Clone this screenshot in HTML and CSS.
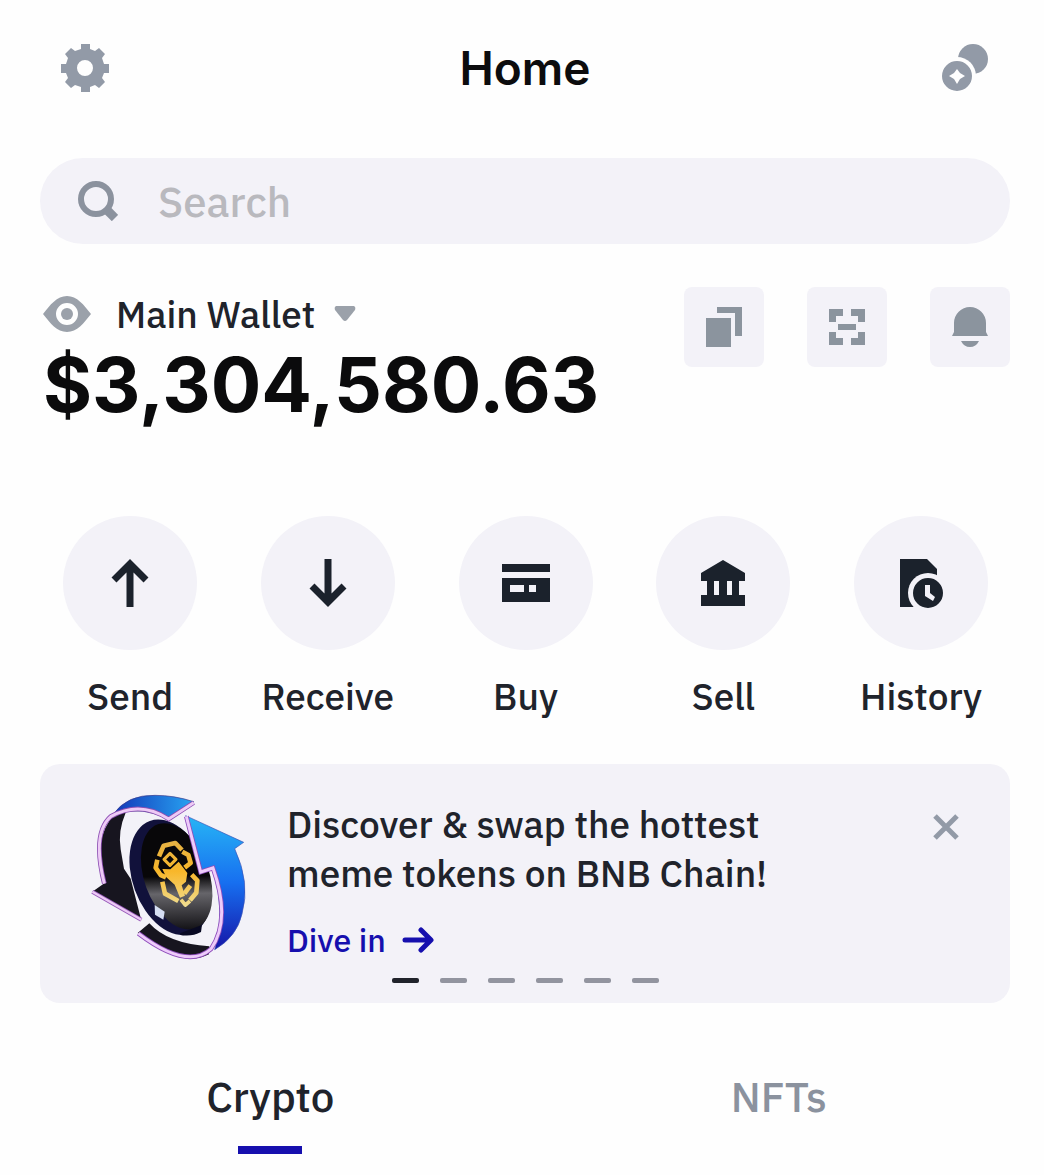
FILE: index.html
```
<!DOCTYPE html>
<html lang="en">
<head>
    <meta charset="UTF-8">
    <meta name="viewport" content="width=device-width, initial-scale=1.0">
    <title>Home</title>
    <link rel="stylesheet" href="styles.css">
</head>
<body>
    <header class="header">
        <button class="icon-button" type="button" aria-label="Settings">
            <svg width="48" height="48" viewBox="0 0 48 48" fill="currentColor">
                <path fill-rule="evenodd" d="M20 0h9v5l5 2 4-3 6 6-3 4 2 6h5v9h-5l-2 5 3 4-6 6-4-3-5 2v5h-9v-5l-6-2-4 3-6-6 3-4-2-5H0v-9h5l2-6-3-4 6-6 4 3 6-2zM24 16a8 8 0 1 0 0 16 8 8 0 0 0 0-16z"/>
            </svg>
        </button>
        <h1>Home</h1>
        <button class="icon-button" type="button" aria-label="Tokens">
            <svg width="48" height="48" viewBox="0 0 48 48" fill="currentColor">
                <mask id="coinCut">
                    <rect width="48" height="48" fill="#fff"/>
                    <circle cx="16" cy="32" r="19" fill="#000"/>
                </mask>
                <circle cx="32" cy="15" r="15" mask="url(#coinCut)"/>
                <path fill-rule="evenodd" d="M16 17a15 15 0 1 0 0 30 15 15 0 0 0 0-30zm0 8 3 4 5 3-5 3-3 5-3-5-5-3 5-3z"/>
            </svg>
        </button>
    </header>

    <main>
        <label class="search">
            <svg width="40" height="40" viewBox="0 0 40 40" fill="none" stroke="currentColor">
                <circle cx="18" cy="18" r="15" stroke-width="6"/>
                <path d="M28 28l9 9" stroke-width="9"/>
            </svg>
            <input type="text" placeholder="Search" aria-label="Search">
        </label>

        <section class="wallet">
            <div class="wallet-info">
                <button class="wallet-name" type="button">
                    <svg width="48" height="36" viewBox="0 0 48 36" fill="currentColor">
                        <path fill-rule="evenodd" d="M0 18C7 9 14 0 24 0s17 9 24 18c-7 9-14 18-24 18S7 27 0 18zM24 7a11 11 0 1 0 0 22 11 11 0 0 0 0-22z"/>
                        <circle cx="24" cy="18" r="6"/>
                    </svg>
                    <span>Main Wallet</span>
                    <svg width="22" height="16" viewBox="0 0 22 16" fill="currentColor">
                        <path d="M2 0h18q2 1 1 4l-8 10q-2 2-4 0L1 4Q0 1 2 0z"/>
                    </svg>
                </button>
                <p class="balance">$3,304,580.63</p>
            </div>
            <div class="tools">
                <button class="tool" type="button" aria-label="Copy address">
                    <svg width="36" height="40" viewBox="0 0 36 40" fill="currentColor">
                        <path d="M0 11h25v29H0zM11 0h25v29h-7V6H11z"/>
                    </svg>
                </button>
                <button class="tool" type="button" aria-label="Scan">
                    <svg width="36" height="36" viewBox="0 0 36 36" fill="currentColor">
                        <path d="M0 0h14v7H7v6H0zM22 0h14v13h-7V7h-7zM0 23h7v6h7v7H0zM29 23h7v13H22v-7h7zM9 15h18v6H9z"/>
                    </svg>
                </button>
                <button class="tool" type="button" aria-label="Notifications">
                    <svg width="36" height="40" viewBox="0 0 36 40" fill="currentColor">
                        <path d="M2 25V16a16 16 0 0 1 32 0v9l2 4H0zM9 34h18q-3 6-9 6t-9-6z"/>
                    </svg>
                </button>
            </div>
        </section>

        <nav class="actions">
            <button class="action" type="button">
                <span class="circle">
                    <svg width="48" height="48" viewBox="0 0 48 48" fill="none" stroke="currentColor" stroke-width="7">
                        <path d="M24 48V5M8 21L24 5l16 16"/>
                    </svg>
                </span>
                <span>Send</span>
            </button>
            <button class="action" type="button">
                <span class="circle">
                    <svg width="48" height="48" viewBox="0 0 48 48" fill="none" stroke="currentColor" stroke-width="7">
                        <path d="M24 0v43M8 27l16 16 16-16"/>
                    </svg>
                </span>
                <span>Receive</span>
            </button>
            <button class="action" type="button">
                <span class="circle">
                    <svg width="48" height="38" viewBox="0 0 48 38" fill="currentColor">
                        <path fill-rule="evenodd" d="M0 0h48v8H0zM0 14h48v24H0zM8 21v7h14v-7zM27 21v7h7v-7z"/>
                    </svg>
                </span>
                <span>Buy</span>
            </button>
            <button class="action" type="button">
                <span class="circle">
                    <svg width="44" height="46" viewBox="0 0 44 46" fill="currentColor">
                        <path d="M22 0l22 13v8h-6v14h6v11H0V35h6V21H0v-8zM13 21v14h5V21zM26 21v14h5V21z" fill-rule="evenodd"/>
                    </svg>
                </span>
                <span>Sell</span>
            </button>
            <button class="action" type="button">
                <span class="circle">
                    <svg width="44" height="50" viewBox="0 0 44 50" fill="currentColor">
                        <mask id="clockCut">
                            <rect width="44" height="50" fill="#fff"/>
                            <circle cx="29" cy="35" r="20" fill="#000"/>
                        </mask>
                        <path d="M1 1h27l10 10v38H1z" mask="url(#clockCut)"/>
                        <path fill-rule="evenodd" d="M29 20a15 15 0 1 0 0 30 15 15 0 0 0 0-30zm-3 7h5v8l5 4-2 4-8-5z"/>
                    </svg>
                </span>
                <span>History</span>
            </button>
        </nav>

        <section class="promo">
            <div class="promo-body">
                <svg class="promo-art" width="157" height="170" viewBox="45 40 471 510" role="img" aria-label="Swap tokens">
                    <defs>
                        <linearGradient id="arrowTop" x1="0" x2="1">
                            <stop offset="0" stop-color="#1237b8"/>
                            <stop offset="1" stop-color="#28a4f2"/>
                        </linearGradient>
                        <linearGradient id="arrowRight" x1="0" y1="0" x2="0" y2="1">
                            <stop offset="0" stop-color="#27b5f5"/>
                            <stop offset="0.5" stop-color="#176ff0"/>
                            <stop offset="1" stop-color="#1616a8"/>
                        </linearGradient>
                        <linearGradient id="coinFace" x1="0.6" y1="0" x2="0.4" y2="1">
                            <stop offset="0.5" stop-color="#080709"/>
                            <stop offset="0.66" stop-color="#66656a"/>
                            <stop offset="1" stop-color="#111014"/>
                        </linearGradient>
                        <linearGradient id="gold" gradientUnits="userSpaceOnUse" x1="0" y1="185" x2="0" y2="385">
                            <stop offset="0" stop-color="#e6b244"/>
                            <stop offset="0.45" stop-color="#f8b72a"/>
                            <stop offset="1" stop-color="#f0df95"/>
                        </linearGradient>
                    </defs>
                    <!-- left and bottom arrow undersides -->
                    <path d="M119 103q18-12 33-4-24 55-15 110l10 58 20 30 32 125L52 336l34-24Q50 180 119 103z" fill="#17151f"/>
                    <path d="M188 460l35-29q55 61 180 69l-1 24q-85 44-214-64z" fill="#17151f"/>
                    <!-- coin -->
                    <ellipse cx="286" cy="293" rx="113" ry="180" transform="rotate(-20 286 293)" fill="#11113b"/>
                    <ellipse cx="305" cy="290" rx="97" ry="166" transform="rotate(-20 305 290)" fill="url(#coinFace)"/>
                    <path d="M239 376l30 20-4 24-25-15z" fill="#d5ddf2"/>
                    <path d="M315 461l66-25-3 21q-28 15-61 9z" fill="#080922"/>
                    <g fill="none" stroke="url(#gold)" stroke-width="14" stroke-linejoin="round">
                        <path d="M252 230l14-32 35-8 20 21"/>
                        <path d="M285 221l18 18-18 18-18-18z" stroke-width="9"/>
                        <path d="M322 216l18 10 7 24-18 14"/>
                        <path d="M247 240l-5 24 15 22 16 7"/>
                        <path d="M262 306l8 36 40 22"/>
                        <path d="M350 285l17 18-3 36-19 23"/>
                        <path d="M346 318l-18 24"/>
                        <path d="M318 360l13 16 14-12" stroke-width="11"/>
                    </g>
                    <path d="M262 268l24 1 25-23 26 34-4 26-13 11 10 31-15 6-16-39-25-22z" fill="url(#gold)"/>
                    <!-- upper blue band and its rim -->
                    <path d="M116 102Q157 45 240 47q58 0 116 19l-75 54Q208 78 116 102z" fill="url(#arrowTop)" stroke="#3c3a8a" stroke-width="2"/>
                    <path d="M88 312Q50 160 108 110q88-48 173 8l75-49" fill="none" stroke="#8c4fb3" stroke-width="14"/>
                    <path d="M88 312Q50 160 108 110q88-48 173 8l75-49" fill="none" stroke="#edcaf5" stroke-width="9"/>
                    <path d="M52 336l147 84" fill="none" stroke="#9558b8" stroke-width="12"/>
                    <path d="M52 336l147 84" fill="none" stroke="#ecc9f5" stroke-width="7"/>
                    <!-- right blue arrow -->
                    <path d="M332 108l174 80-27 19q48 103 22 196-15 68-82 107 34-113-5-242l-37 13z" fill="url(#arrowRight)" stroke="#3951b5" stroke-width="2"/>
                    <path d="M334 110l43 167 37-12q55 155-6 243-72 64-218-47" fill="none" stroke="#8e4dbb" stroke-width="14"/>
                    <path d="M334 110l43 167 37-12q55 155-6 243-72 64-218-47" fill="none" stroke="#edcbfa" stroke-width="9"/>
                </svg>
                <div class="promo-text">
                    <h2>Discover &amp; swap the hottest meme tokens on BNB Chain!</h2>
                    <a class="promo-link" href="#">
                        Dive in
                        <svg width="32" height="26" viewBox="0 0 32 26" fill="none" stroke="currentColor" stroke-width="5" stroke-linecap="round" stroke-linejoin="round">
                            <path d="M3 13h25M19 3l10 10-10 10"/>
                        </svg>
                    </a>
                </div>
                <button class="close" type="button" aria-label="Close">
                    <svg width="28" height="28" viewBox="0 0 28 28" fill="none" stroke="currentColor" stroke-width="5">
                        <path d="M3 3l22 22M25 3L3 25"/>
                    </svg>
                </button>
            </div>
            <div class="dots">
                <span class="dot active"></span>
                <span class="dot"></span>
                <span class="dot"></span>
                <span class="dot"></span>
                <span class="dot"></span>
                <span class="dot"></span>
            </div>
        </section>

        <nav class="tabs">
            <button class="tab active" type="button">Crypto</button>
            <button class="tab" type="button">NFTs</button>
        </nav>
    </main>
</body>
</html>
```
FILE: styles.css
```
* {
    box-sizing: border-box;
}
body {
    margin: 0;
    background-color: #fefefe;
    color: #20232b;
    font-family: "IBM Plex Sans", Roboto, sans-serif;
    font-size: 37px;
    font-weight: 500;
}
h1, h2, p {
    margin: 0;
}
svg {
    display: block;
    flex: none;
}
button {
    padding: 0;
    border: 0;
    background: none;
    color: inherit;
    font: inherit;
    cursor: pointer;
}
.header {
    display: flex;
    align-items: center;
    justify-content: space-between;
    height: 135px;
    padding: 0 55px 0 61px;
}
.header h1 {
    color: #0c0c0e;
    font-family: Inter, sans-serif;
    font-size: 46px;
    font-weight: 600;
}
.icon-button {
    color: #929aa7;
}
.search {
    display: flex;
    align-items: center;
    gap: 40px;
    height: 86px;
    margin: 23px 34px 0 40px;
    padding: 0 38px;
    border-radius: 43px;
    background-color: #f3f2f8;
    color: #8b929e;
}
.search input {
    flex: 1;
    min-width: 0;
    padding: 0;
    border: 0;
    outline: 0;
    background: none;
    color: #20232b;
    font: inherit;
    font-size: 42px;
}
.search input::placeholder {
    color: #b9b9be;
    opacity: 1;
}
.wallet {
    display: flex;
    justify-content: space-between;
    margin: 43px 34px 0 43px;
}
.wallet-name {
    display: flex;
    align-items: center;
    height: 54px;
}
.wallet-name span {
    margin: 0 19px 0 25px;
}
.wallet-name svg {
    color: #9ba1aa;
}
.balance {
    color: #0b0b0c;
    font-family: Inter, sans-serif;
    font-size: 75px;
    font-weight: 700;
    line-height: 88px;
}
.tools {
    display: flex;
    gap: 43px;
}
.tool {
    display: grid;
    place-items: center;
    width: 80px;
    height: 80px;
    border-radius: 8px;
    background-color: #f3f2f8;
    color: #8b949e;
}
.actions {
    display: flex;
    justify-content: space-between;
    margin-top: 87px;
    padding: 0 56px 0 63px;
}
.action {
    display: flex;
    flex-direction: column;
    align-items: center;
    gap: 22px;
    width: 134px;
    line-height: 48px;
}
.circle {
    display: grid;
    place-items: center;
    width: 134px;
    height: 134px;
    border-radius: 50%;
    background-color: #f3f2f8;
    color: #1b222c;
}
.promo {
    margin: 44px 34px 0 40px;
    padding: 29px 50px 20px;
    border-radius: 20px;
    background-color: #f3f2f8;
}
.promo-body {
    display: flex;
    align-items: flex-start;
}
.promo-text {
    flex: 1;
    max-width: 520px;
    margin-left: 40px;
    padding-top: 7px;
}
.promo-text h2 {
    font-size: 37px;
    font-weight: 500;
    line-height: 49px;
}
.promo-link {
    display: inline-flex;
    align-items: center;
    gap: 16px;
    margin-top: 22px;
    color: #160fae;
    font-size: 32px;
    line-height: 40px;
    text-decoration: none;
}
.close {
    margin-top: 20px;
    margin-left: auto;
    color: #929aa7;
}
.dots {
    display: flex;
    justify-content: center;
    gap: 21px;
    margin-top: 15px;
}
.dot {
    width: 27px;
    height: 5px;
    border-radius: 2px;
    background-color: #92949f;
}
.dot.active {
    background-color: #20232b;
}
.tabs {
    display: flex;
    margin-top: 70px;
    padding: 0 11px 0 16px;
}
.tab {
    display: flex;
    flex: 1;
    flex-direction: column;
    align-items: center;
    gap: 25px;
    color: #8b929e;
    font-size: 42px;
    line-height: 48px;
}
.tab.active {
    color: #20232b;
}
.tab.active::after {
    content: "";
    width: 64px;
    height: 8px;
    background-color: #160fae;
}
```
